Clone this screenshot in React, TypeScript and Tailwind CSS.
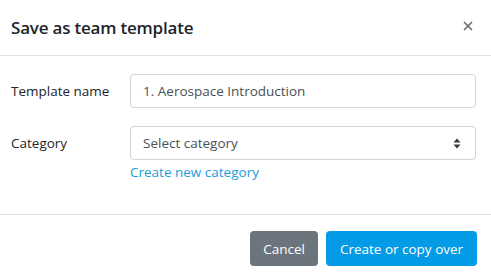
import { X } from 'lucide-react';

export default function App() {
  return (
    <div className="w-[491px] h-[277px] bg-white text-[#212529] font-['Segoe_UI','Open_Sans',sans-serif] overflow-hidden">
      <div className="flex items-center justify-between h-[56px] pl-[11px] pr-[16px] border-b border-[#dee2e6]">
        <h2 className="text-[17px] font-semibold tracking-[-0.2px]">Save as team template</h2>
        <button className="text-[#6f6f6f] mt-[-3px]">
          <X size={14} strokeWidth={3} />
        </button>
      </div>

      <div className="pl-[11px] pr-[15px] pt-[18px] pb-[32px] border-b border-[#dee2e6] text-[13.5px]">
        <div className="flex items-center">
          <label className="w-[119px]">Template name</label>
          <input
            className="flex-1 h-[34px] px-[12px] border border-[#ced4da] rounded-[4px] text-[#495057] outline-none"
            defaultValue="1. Aerospace Introduction"
          />
        </div>
        <div className="flex items-start mt-[18px]">
          <label className="w-[119px] h-[34px] flex items-center">Category</label>
          <div className="flex-1">
            <div className="h-[34px] px-[12px] border border-[#ced4da] rounded-[4px] text-[#495057] flex items-center justify-between">
              <span>Select category</span>
              <svg width="8" height="11" viewBox="0 0 8 11" className="mr-[2px]">
                <path d="M4 0.5 L7.5 4.5 H0.5 Z M4 10.5 L7.5 6.5 H0.5 Z" fill="#343a40" />
              </svg>
            </div>
            <a className="block mt-[2px] text-[#1a9dd9]">Create new category</a>
          </div>
        </div>
      </div>

      <div className="flex justify-end gap-[8px] pr-[14px] pt-[16px] text-[13.5px]">
        <button className="w-[68px] h-[35px] rounded-[4px] bg-[#6c757d] text-white">Cancel</button>
        <button className="w-[151px] h-[35px] rounded-[4px] bg-[#039be5] text-white">Create or copy over</button>
      </div>
    </div>
  );
}
